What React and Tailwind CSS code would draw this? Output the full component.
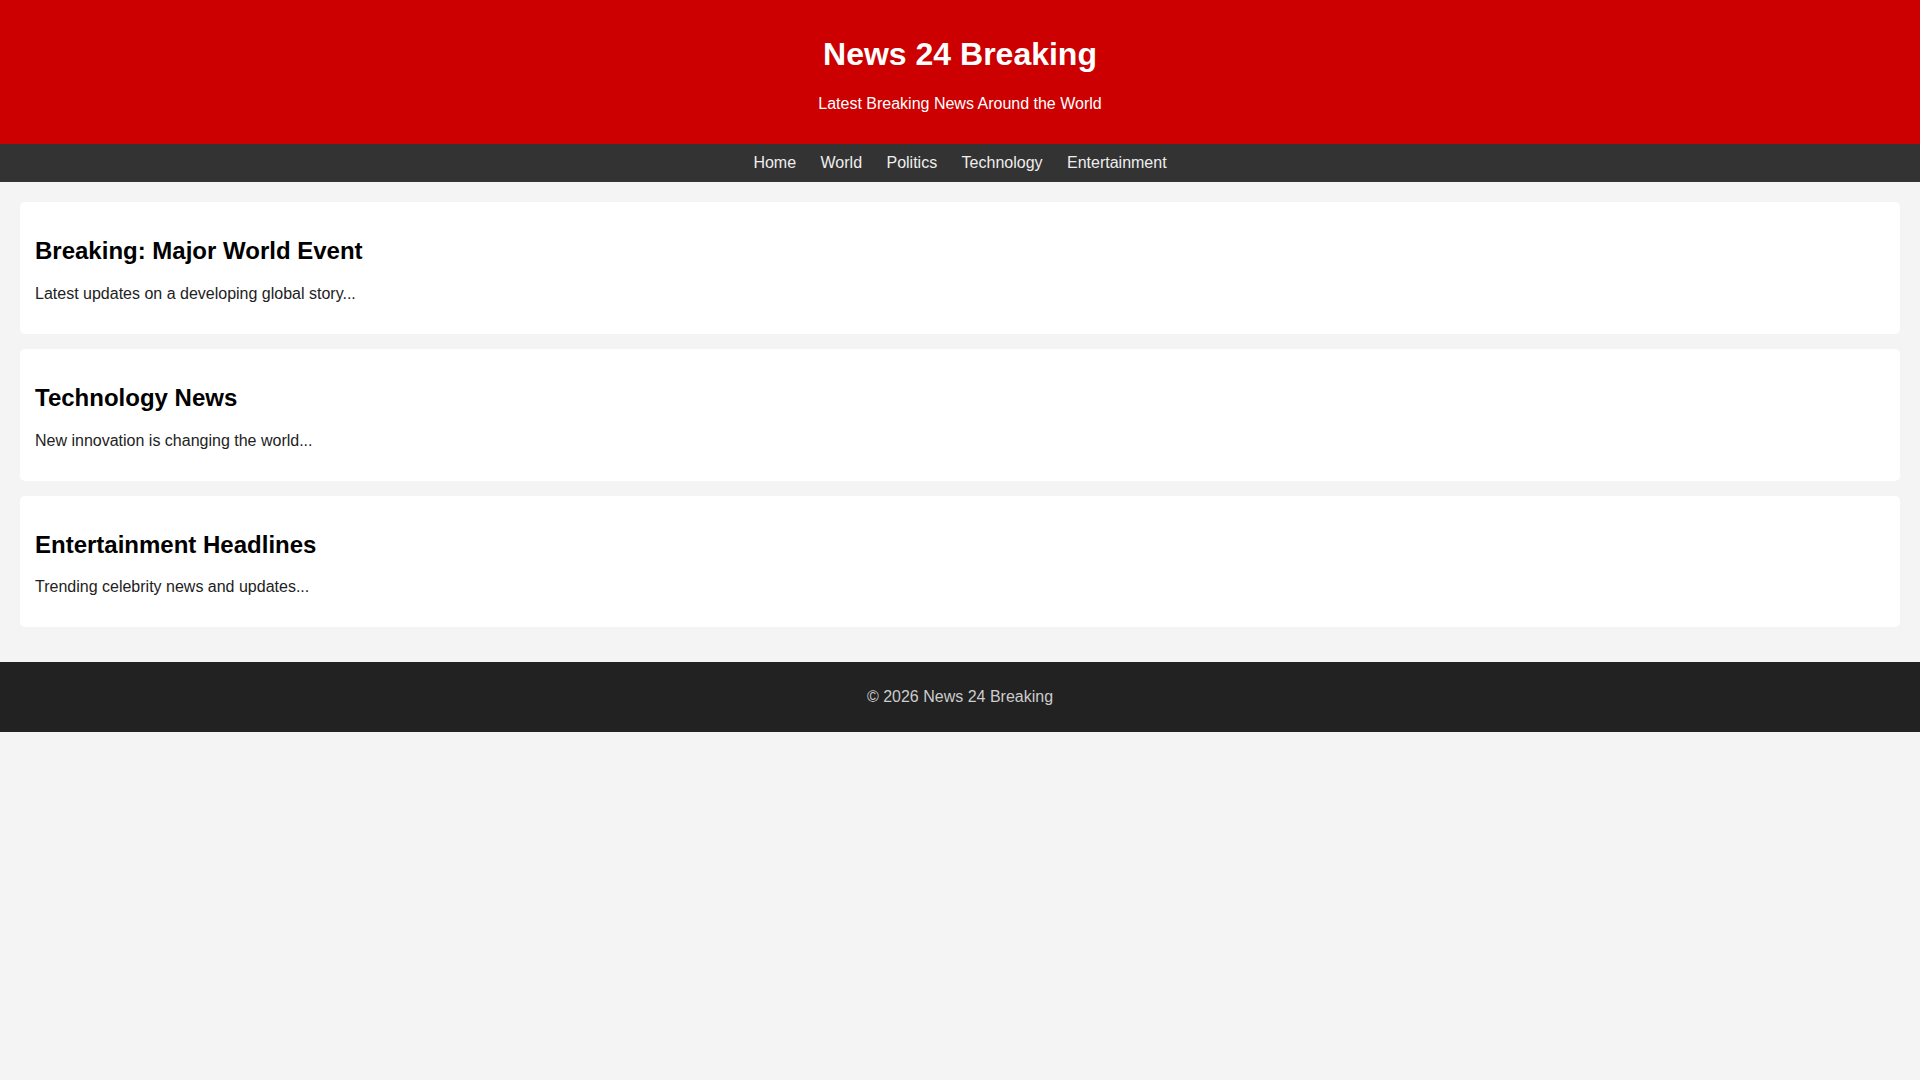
const navLinks = ["Home", "World", "Politics", "Technology", "Entertainment"];

const articles = [
  {
    title: "Breaking: Major World Event",
    summary: "Latest updates on a developing global story...",
  },
  {
    title: "Technology News",
    summary: "New innovation is changing the world...",
  },
  {
    title: "Entertainment Headlines",
    summary: "Trending celebrity news and updates...",
  },
];

const App = () => {
  return (
    <div className="min-h-screen bg-[#f4f4f4] font-['Liberation_Sans',Arial,sans-serif] text-[16px] text-[#222]">
      {/* HEADER */}
      <header className="bg-[#cc0000] text-white text-center h-[144px] pt-[36px]">
        <h1 className="m-0 text-[32px] font-bold leading-[normal]">News 24 Breaking</h1>
        <p className="mt-[22.4px] mb-0 leading-[normal]">Latest Breaking News Around the World</p>
      </header>

      {/* NAV */}
      <nav className="bg-[#333] h-[38px] pt-[10px] flex justify-center gap-[24.45px]">
        {navLinks.map((link) => (
          <a key={link} href="#" className="text-[#eee] leading-[normal]">
            {link}
          </a>
        ))}
      </nav>

      {/* ARTICLES */}
      <main className="p-5">
        {articles.map((a) => (
          <article key={a.title} className="bg-white rounded-[5px] p-[15px] mb-[15px]">
            <h2 className="my-[0.83em] text-[24px] font-bold leading-[normal] text-black">
              {a.title}
            </h2>
            <p className="my-4 leading-[normal]">{a.summary}</p>
          </article>
        ))}
      </main>

      {/* FOOTER */}
      <footer className="bg-[#222] h-[70px] pt-[26px] text-center text-[#ccc]">
        <p className="m-0 leading-[normal]">© 2026 News 24 Breaking</p>
      </footer>
    </div>
  );
};

export default App;
